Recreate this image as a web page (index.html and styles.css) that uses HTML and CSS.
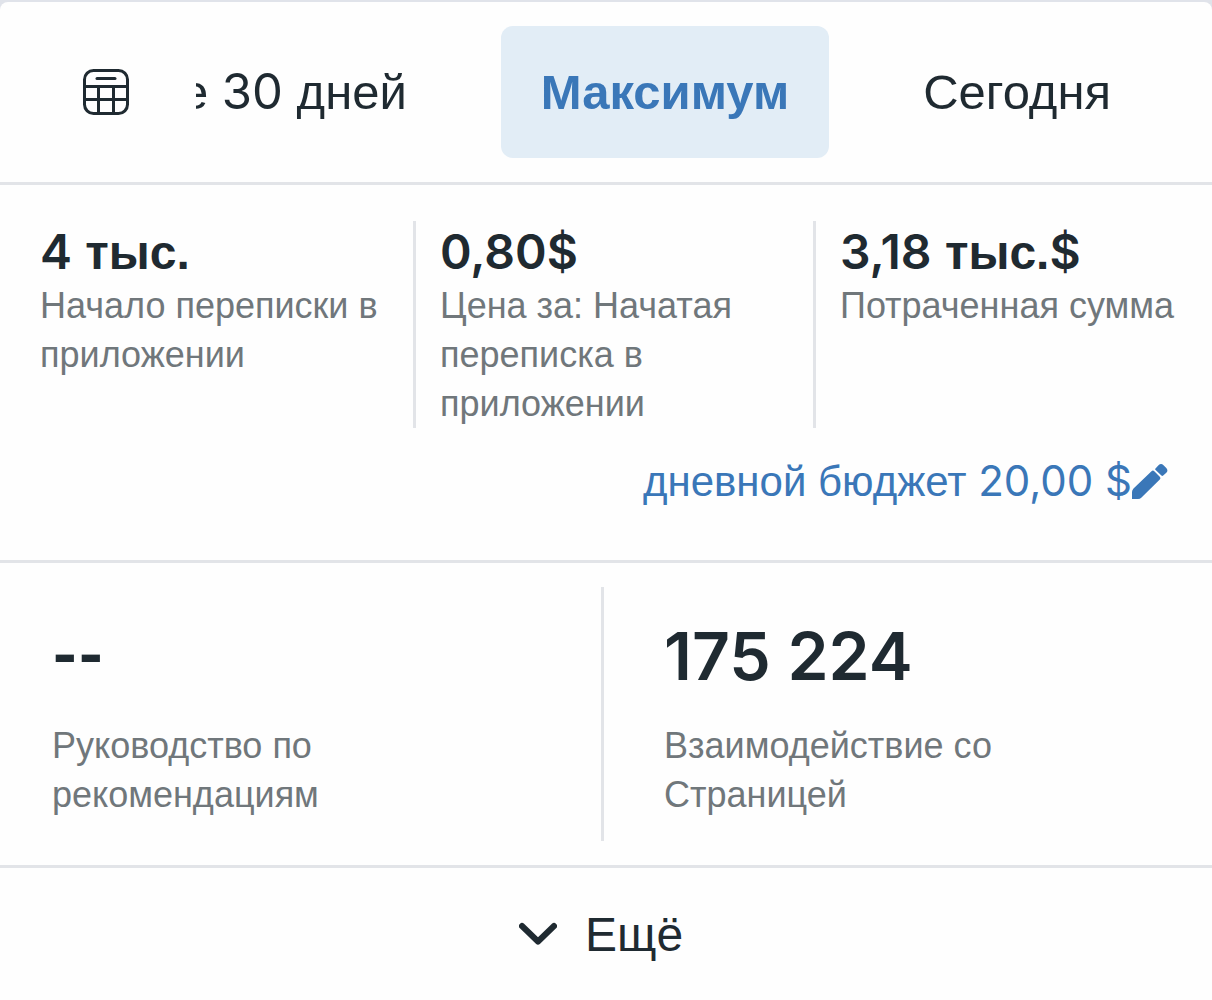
FILE: index.html
```html
<!DOCTYPE html>
<html lang="ru">
<head>
<meta charset="utf-8">
<meta name="viewport" content="width=device-width, initial-scale=1">
<title>Результаты рекламы</title>
<link rel="stylesheet" href="styles.css">
</head>
<body>
<main class="card">
  <header class="period">
    <button class="period-picker" type="button" aria-label="Выбрать даты">
      <svg class="icon-calendar" viewBox="0 0 46 46" fill="none" stroke="currentColor" stroke-width="3" aria-hidden="true">
        <rect x="1.5" y="1.5" width="43" height="43" rx="9"/>
        <path d="M2 17.500h42M2 30.500h42M15.500 17.500v27M30.500 17.500v27"/>
        <path d="M14 9.500h18" stroke-linecap="round"/>
      </svg>
    </button>
    <nav class="tabs" aria-label="Период">
      <button class="tab" type="button">Последние <span class="num">30</span> дней</button>
      <button class="tab tab-active" type="button" aria-pressed="true">Максимум</button>
      <button class="tab" type="button">Сегодня</button>
    </nav>
  </header>

  <section class="results">
    <div class="metrics">
      <div class="metric">
        <strong class="metric-value"><span class="num">4</span> тыс.</strong>
        <span class="label">Начало переписки в приложении</span>
      </div>
      <div class="metric">
        <strong class="metric-value"><span class="num">0,80$</span></strong>
        <span class="label">Цена за: Начатая переписка в приложении</span>
      </div>
      <div class="metric">
        <strong class="metric-value"><span class="num">3,18</span> тыс.<span class="num">$</span></strong>
        <span class="label">Потраченная сумма</span>
      </div>
    </div>
    <button class="budget" type="button">
      <span>дневной бюджет <span class="num">20,00 $</span></span>
      <svg class="icon-pencil" viewBox="0 0 36 36" fill="currentColor" aria-hidden="true">
        <path d="M0 35V28Q0 26 1.500 24.500L19.500 7.200Q21 6 22.300 7.300L28 13Q29 14.300 27.800 15.600L9.500 33.500Q8 35 6 35Z"/>
        <path d="M23.500 4.500L26.500 1.300Q29 -1 31.500 1.200L34.300 4Q36.500 6.500 34.300 8.800L31.200 11.600Q30.300 12.300 29.400 11.500L23.600 6Q22.800 5.200 23.500 4.500Z"/>
      </svg>
    </button>
  </section>

  <section class="summary">
    <div class="summary-item">
      <strong class="summary-value summary-empty">--</strong>
      <span class="label">Руководство по рекомендациям</span>
    </div>
    <div class="summary-item">
      <strong class="summary-value"><span class="num">175 224</span></strong>
      <span class="label">Взаимодействие со Страницей</span>
    </div>
  </section>

  <button class="more" type="button">
    <svg class="icon-chevron" viewBox="0 0 38 24" fill="none" stroke="currentColor" stroke-width="6" stroke-linecap="round" stroke-linejoin="round" aria-hidden="true">
      <path d="M3 4L19 19.500L35 4"/>
    </svg>
    <span>Ещё</span>
  </button>
</main>
</body>
</html>
```
FILE: styles.css
```css
* {
  box-sizing: border-box;
}

body {
  margin: 0;
  background: #e0e3ea;
  color: #1f2a31;
  font-family: "Liberation Sans", Arial, sans-serif;
}

button {
  border: 0;
  padding: 0;
  background: none;
  color: inherit;
  font: inherit;
  cursor: pointer;
}

svg {
  display: block;
  flex: none;
}

.num {
  font-family: Inter, "Liberation Sans", sans-serif;
  line-height: 1;
}

strong .num {
  font-weight: 600;
}

.card {
  display: flex;
  flex-direction: column;
  min-height: calc(100vh - 2px);
  margin-top: 2px;
  border-radius: 8px 8px 0 0;
  background: #fefefe;
}

/* Period switcher */
.period {
  display: flex;
  align-items: center;
  gap: 67px;
  padding: 24px 0 24px 83px;
  border-bottom: 3px solid #e2e4e8;
}

.icon-calendar {
  width: 46px;
  height: 46px;
}

.tabs {
  display: flex;
  flex: 1;
  justify-content: flex-end;
  gap: 54px;
  min-width: 0;
  padding-right: 61px;
  overflow: hidden;
}

.tab {
  flex: none;
  height: 132px;
  padding: 0 40px;
  border-radius: 12px;
  font-size: 49px;
  white-space: nowrap;
}

.tab-active {
  background: #e2edf6;
  color: #3a77b8;
  font-weight: 700;
}

/* Campaign results */
.results {
  display: flex;
  flex-direction: column;
  padding: 36px 0 48px;
  border-bottom: 3px solid #e2e4e8;
}

.metrics {
  display: grid;
  grid-template-columns: 416fr 400fr 396fr;
}

.metric {
  display: flex;
  flex-direction: column;
  padding: 4px 24px 0;
  border-right: 3px solid #e2e4e8;
}

.metric:first-child {
  padding-left: 40px;
}

.metric:last-child {
  border-right: 0;
}

.metric-value {
  font-size: 48px;
  line-height: 56px;
}

.label {
  color: #70777b;
  font-size: 36px;
  line-height: 49px;
}

.budget {
  display: flex;
  align-items: center;
  align-self: flex-end;
  margin: 24px 44px 0 0;
  color: #3a77b8;
  font-size: 42px;
  line-height: 60px;
}

.icon-pencil {
  width: 36px;
  height: 36px;
}

/* Summary */
.summary {
  display: grid;
  grid-template-columns: 604fr 608fr;
  padding: 24px 0;
  border-bottom: 3px solid #e2e4e8;
}

.summary-item {
  display: flex;
  flex-direction: column;
  gap: 24px;
  padding: 30px 200px 22px 60px;
}

.summary-item:first-child {
  padding-left: 52px;
  border-right: 3px solid #e2e4e8;
}

.summary-value {
  font-size: 66px;
  line-height: 80px;
}

.summary-empty {
  font-family: Roboto, "Liberation Sans", sans-serif;
}

.more {
  display: flex;
  flex: 1;
  align-items: center;
  justify-content: center;
  gap: 28px;
  min-height: 130px;
  padding-right: 10px;
  font-size: 48px;
}

.icon-chevron {
  width: 38px;
  height: 24px;
}
```
